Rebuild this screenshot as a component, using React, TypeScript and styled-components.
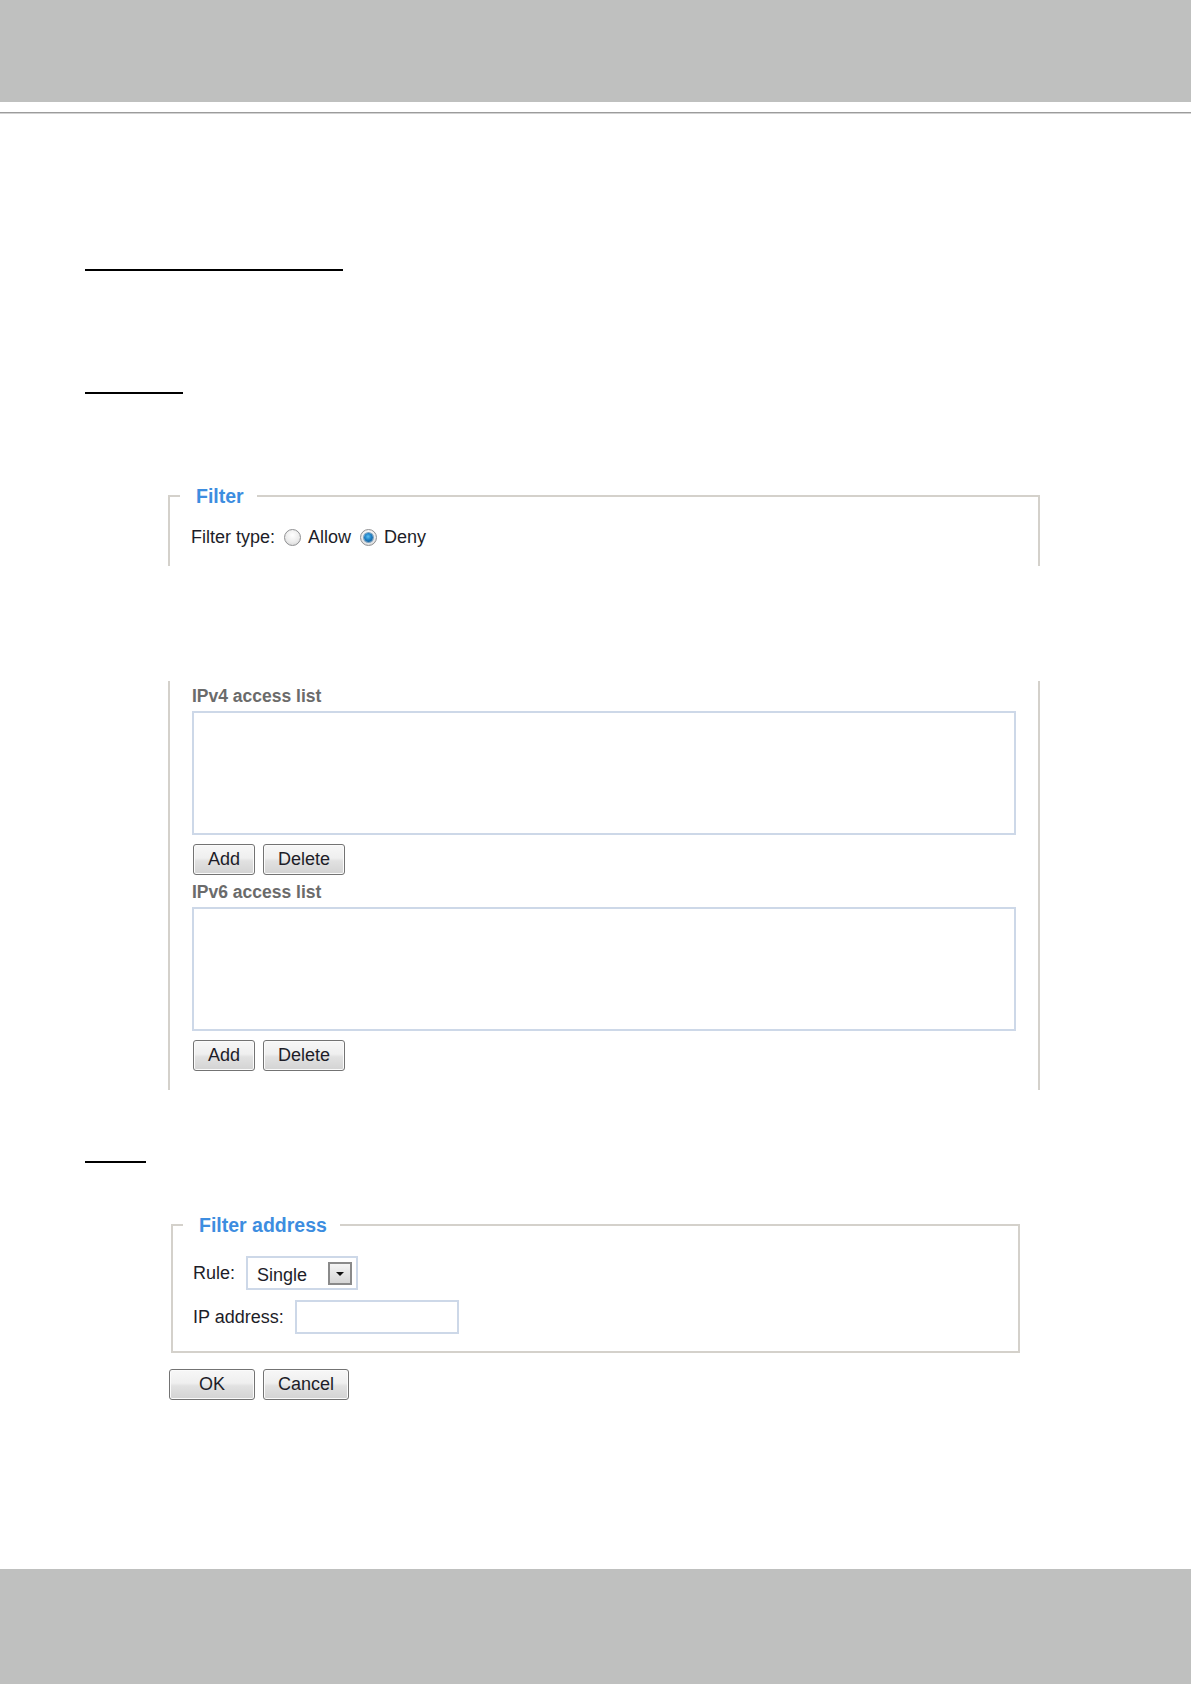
import styled, { createGlobalStyle } from 'styled-components';

const GlobalStyle = createGlobalStyle`
    html, body {
        margin: 0;
        padding: 0;
        background: #ffffff;
    }
    body {
        font-family: 'Liberation Sans', Arial, sans-serif;
        color: #1d1d28;
    }
`;

const Page = styled.div`
    width: 1191px;
    min-height: 1684px;
    display: flex;
    flex-direction: column;
    background: #ffffff;
`;

const Header = styled.div`
    height: 102px;
    background: #bfc0bf;
`;

const HeaderRule = styled.div`
    margin-top: 10px;
    border-top: 1px solid #9c9c9c;
    border-bottom: 1px solid #d2d2d2;
`;

const Main = styled.main`
    display: flex;
    flex-direction: column;
    align-items: flex-start;
    padding-left: 85px;
`;

// underlined headings whose words were blanked out in the manual
const Blank = styled.span<{ $width: number; $top: number }>`
    display: block;
    width: ${(p) => p.$width}px;
    height: 2px;
    margin-top: ${(p) => p.$top}px;
    background: #000000;
`;

const FieldSet = styled.fieldset<{ $open?: boolean; $left: number; $width: number; $top: number }>`
    box-sizing: border-box;
    margin: ${(p) => p.$top}px 0 0 ${(p) => p.$left}px;
    width: ${(p) => p.$width}px;
    min-width: 0;
    padding: 0 0 ${(p) => (p.$open ? 18 : 17)}px 10px;
    border: 2px solid #d4d1cb;
    border-bottom: ${(p) => (p.$open ? 'none' : '2px solid #d4d1cb')};
`;

const Legend = styled.legend<{ $right: number }>`
    padding: 0 ${(p) => p.$right}px 0 ${(p) => p.$right + 3}px;
    font-size: 19.5px;
    line-height: 22px;
    font-weight: bold;
    color: #3d8de0;
`;

const FieldRow = styled.div<{ $top: number }>`
    display: flex;
    align-items: center;
    margin: ${(p) => p.$top}px 0 0 11px;
    font-size: 18px;
    line-height: 22px;
`;

const RadioOption = styled.label`
    display: flex;
    align-items: center;
    gap: 7px;
    margin-left: 9px;
`;

const Radio = styled.span<{ $checked?: boolean }>`
    position: relative;
    box-sizing: border-box;
    width: 17px;
    height: 17px;
    border-radius: 50%;
    border: 1px solid #8f9092;
    background: radial-gradient(circle at 50% 35%, #ffffff 0%, #ececec 55%, #cfcfcf 100%);

    &::after {
        content: '';
        display: ${(p) => (p.$checked ? 'block' : 'none')};
        position: absolute;
        left: 3px;
        top: 3px;
        width: 9px;
        height: 9px;
        border-radius: 50%;
        background: radial-gradient(circle at 45% 40%, #5ec0f2 0%, #1d7fc4 45%, #104a7d 100%);
        box-shadow: 0 0 0 1px #7fa3bf;
    }
`;

const ListPanel = styled.section`
    box-sizing: border-box;
    width: 872px;
    margin: 115px 0 0 83px;
    padding: 5px 22px 19px 22px;
    border-left: 2px solid #d4d1cb;
    border-right: 2px solid #d4d1cb;
`;

const ListTitle = styled.div<{ $top: number }>`
    margin-top: ${(p) => p.$top}px;
    font-size: 17.5px;
    line-height: 20px;
    font-weight: bold;
    color: #6b6b6b;
`;

const ListBox = styled.div`
    box-sizing: border-box;
    width: 824px;
    height: 124px;
    margin-top: 5px;
    border: 2px solid #cdd8e8;
    background: #ffffff;
`;

const ButtonRow = styled.div<{ $top: number; $left?: number }>`
    display: flex;
    gap: 8px;
    margin: ${(p) => p.$top}px 0 0 ${(p) => p.$left ?? 1}px;
`;

const FormButton = styled.button<{ $min?: number }>`
    box-sizing: border-box;
    height: 31px;
    min-width: ${(p) => p.$min ?? 0}px;
    padding: 0 14px;
    border: 1px solid #737373;
    border-radius: 3px;
    background: linear-gradient(#f7f7f7 0%, #efefef 45%, #e1e1e1 55%, #d3d3d3 100%);
    box-shadow: inset 0 0 0 1px #fbfbfb;
    font-family: 'Liberation Sans', Arial, sans-serif;
    font-size: 18px;
    color: #1d1d28;
    cursor: pointer;
`;

const ControlRow = styled.div<{ $top: number }>`
    display: flex;
    align-items: center;
    gap: 11px;
    margin: ${(p) => p.$top}px 0 0 10px;
    font-size: 18px;
    line-height: 22px;
`;

const SelectBox = styled.div`
    box-sizing: border-box;
    width: 112px;
    height: 34px;
    display: flex;
    align-items: flex-start;
    justify-content: space-between;
    padding: 4px 4px 0 9px;
    border: 2px solid #cdd8e8;
    overflow: hidden;
`;

const SelectText = styled.span`
    padding-top: 3px;
    font-size: 18px;
    line-height: 20px;
`;

const DropButton = styled.span`
    box-sizing: border-box;
    width: 24px;
    height: 23px;
    display: flex;
    align-items: center;
    justify-content: center;
    border: 2px solid #8a8a8a;
    background: linear-gradient(#f4f4f4, #d6d6d6);
`;

const TextInput = styled.div`
    box-sizing: border-box;
    width: 164px;
    height: 34px;
    border: 2px solid #cdd8e8;
`;

const Footer = styled.div`
    margin-top: auto;
    height: 115px;
    background: #bfc0bf;
`;

export default function App() {
    return (
        <Page>
            <GlobalStyle />
            <Header />
            <HeaderRule />
            <Main>
                <Blank $width={258} $top={155} />
                <Blank $width={98} $top={121} />

                <FieldSet $open $left={83} $width={872} $top={91}>
                    <Legend $right={13}>Filter</Legend>
                    <FieldRow $top={19}>
                        Filter type:
                        <RadioOption>
                            <Radio />
                            Allow
                        </RadioOption>
                        <RadioOption>
                            <Radio $checked />
                            Deny
                        </RadioOption>
                    </FieldRow>
                </FieldSet>

                <ListPanel>
                    <ListTitle $top={0}>IPv4 access list</ListTitle>
                    <ListBox />
                    <ButtonRow $top={9}>
                        <FormButton>Add</FormButton>
                        <FormButton>Delete</FormButton>
                    </ButtonRow>
                    <ListTitle $top={7}>IPv6 access list</ListTitle>
                    <ListBox />
                    <ButtonRow $top={9}>
                        <FormButton>Add</FormButton>
                        <FormButton>Delete</FormButton>
                    </ButtonRow>
                </ListPanel>

                <Blank $width={61} $top={71} />

                <FieldSet $left={86} $width={849} $top={51}>
                    <Legend $right={13}>Filter address</Legend>
                    <ControlRow $top={20}>
                        Rule:
                        <SelectBox>
                            <SelectText>Single</SelectText>
                            <DropButton>
                                <svg width="10" height="6" viewBox="0 0 10 6">
                                    <path d="M1 1h8L5 5z" fill="#111" />
                                </svg>
                            </DropButton>
                        </SelectBox>
                    </ControlRow>
                    <ControlRow $top={10}>
                        IP address:
                        <TextInput />
                    </ControlRow>
                </FieldSet>

                <ButtonRow $top={16} $left={84}>
                    <FormButton $min={86}>OK</FormButton>
                    <FormButton>Cancel</FormButton>
                </ButtonRow>
            </Main>
            <Footer />
        </Page>
    );
}
